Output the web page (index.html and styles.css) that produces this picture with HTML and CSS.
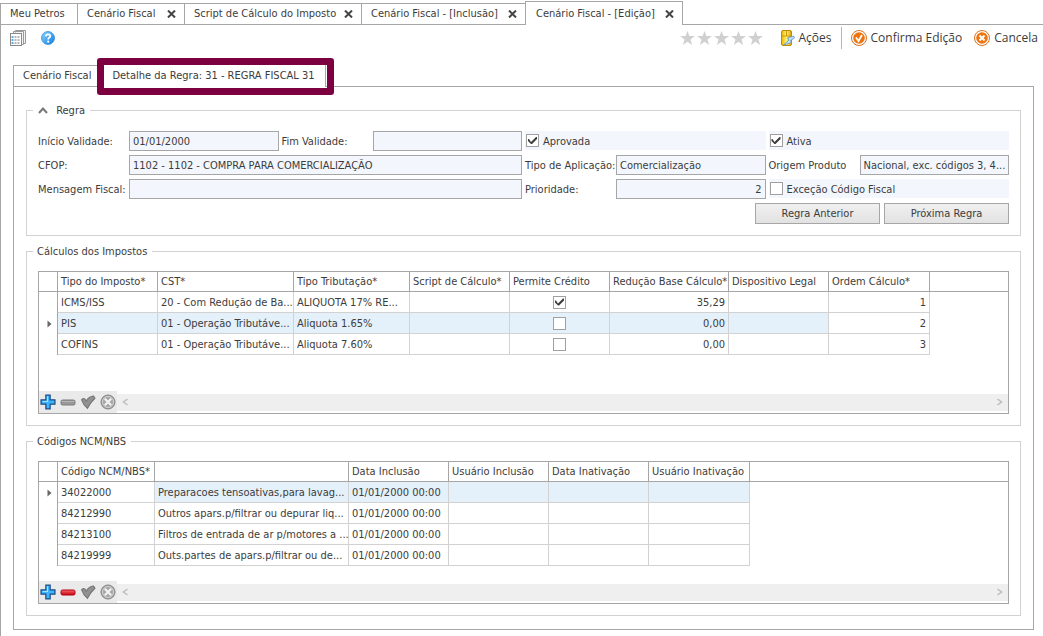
FILE: index.html
```html
<!DOCTYPE html>
<html lang="pt-BR">
<head>
    <meta charset="UTF-8">
    <meta name="viewport" content="width=device-width, initial-scale=1.0">
    <title>Cenário Fiscal - [Edição]</title>
    <link rel="stylesheet" href="styles.css">
</head>
<body>
    <!-- shared icons -->
    <svg class="sprite" aria-hidden="true">
        <defs>
            <linearGradient id="blue" x1="0" y1="0" x2="1" y2="1">
                <stop offset="0" stop-color="#8fd8ff"/><stop offset="1" stop-color="#0a7be0"/>
            </linearGradient>
            <linearGradient id="red" x1="0" y1="0" x2="0" y2="1">
                <stop offset="0" stop-color="#f56a6a"/><stop offset="1" stop-color="#c80010"/>
            </linearGradient>
            <linearGradient id="gold" x1="0" y1="0" x2="1" y2="0">
                <stop offset="0" stop-color="#e8b400"/><stop offset="0.5" stop-color="#fff27a"/><stop offset="1" stop-color="#d9a000"/>
            </linearGradient>
        </defs>
        <symbol id="i-close" viewBox="0 0 9 8"><path d="M1 0.5L8 7.5M8 0.5L1 7.5" fill="none" stroke="#444" stroke-width="2"/></symbol>
        <symbol id="i-star" viewBox="0 0 15 14"><path d="M7.500 0L9.400 4.900L15 5L10.500 8.400L12.100 14L7.500 10.800L2.900 14L4.500 8.400L0 5L5.600 4.900Z" fill="#d0d0d0"/></symbol>
        <symbol id="i-plus" viewBox="0 0 15 15"><path d="M5.500 1H9.500V5.500H14V9.500H9.500V14H5.500V9.500H1V5.500H5.500Z" fill="#3fb4ff" stroke="#1d4f86" stroke-width="1.200"/><path d="M7 2V7H2.500" fill="none" stroke="#a6e0ff"/></symbol>
        <symbol id="i-minus" viewBox="0 0 16 15"><rect x="1" y="5.500" width="14" height="5" rx="1.500" fill="#999" stroke="#7c7c7c"/><path d="M2 7H14" stroke="#b5b5b5"/></symbol>
        <symbol id="i-minus-red" viewBox="0 0 16 15"><rect x="1" y="5.500" width="14" height="5" rx="1.500" fill="url(#red)" stroke="#b80010"/></symbol>
        <symbol id="i-check" viewBox="0 0 15 15"><path d="M1.500 5.500Q3.500 2.500 5.800 6.500Q8.500 2 12.500 1.800L14 4Q9.500 8 7 13.500Q3 10 1.500 5.500Z" fill="#919191" stroke="#747474"/></symbol>
        <symbol id="i-cancel" viewBox="0 0 16 16"><circle cx="8" cy="8" r="7" fill="#a6a6a6" stroke="#858585"/><circle cx="8" cy="8" r="5.500" fill="none" stroke="#d4d4d4"/><path d="M4.800 4.800L11.200 11.200M11.200 4.800L4.800 11.200" stroke="#f2f2f2" stroke-width="2.200"/></symbol>
        <symbol id="i-left" viewBox="0 0 7 8"><path d="M5.500 1L1.500 4L5.500 7" fill="none" stroke="#bdbdbd" stroke-width="1.500"/></symbol>
        <symbol id="i-right" viewBox="0 0 7 8"><path d="M1.500 1L5.500 4L1.500 7" fill="none" stroke="#bdbdbd" stroke-width="1.500"/></symbol>
    </svg>

    <nav class="tabs">
        <div class="tab"><a href="#">Meu Petros</a></div>
        <div class="tab"><a href="#">Cenário Fiscal</a><button class="close" aria-label="Fechar"><svg><use href="#i-close"/></svg></button></div>
        <div class="tab"><a href="#">Script de Cálculo do Imposto</a><button class="close" aria-label="Fechar"><svg><use href="#i-close"/></svg></button></div>
        <div class="tab"><a href="#">Cenário Fiscal - [Inclusão]</a><button class="close" aria-label="Fechar"><svg><use href="#i-close"/></svg></button></div>
        <div class="tab active"><a href="#">Cenário Fiscal - [Edição]</a><button class="close" aria-label="Fechar"><svg><use href="#i-close"/></svg></button></div>
    </nav>

    <main class="frame">
        <div class="toolbar">
            <button class="tool" aria-label="Listas">
                <svg viewBox="0 0 16 16">
                    <path d="M5.500 2.500V0.500H15.500V13.500H13.500M3.500 3.500V1.500H13.500V14.500H11.500" fill="#f4f4f4" stroke="#9a9a9a"/>
                    <rect x="0.500" y="3.500" width="11" height="12" fill="#fff" stroke="#8a8a8a"/>
                    <path d="M2.500 6V14" stroke="#5aaee8" stroke-width="2" stroke-dasharray="2 1"/>
                    <path d="M5.500 6V14M8.500 6V14" stroke="#b8b8b8" stroke-width="2" stroke-dasharray="2 1"/>
                </svg>
            </button>
            <button class="tool" aria-label="Ajuda">
                <svg viewBox="0 0 16 16">
                    <circle cx="8" cy="8" r="6.500" fill="url(#blue)" stroke="#2f8fdc" stroke-width="0.800"/>
                    <path d="M5.800 6.300Q6 4.300 8.100 4.300Q10.300 4.300 10.300 6.100Q10.300 7.200 9.100 7.800Q8.200 8.300 8.200 9.500" fill="none" stroke="#fff" stroke-width="1.700"/>
                    <circle cx="8.200" cy="11.700" r="1.100" fill="#fff"/>
                </svg>
            </button>
            <div class="stars">
                <svg><use href="#i-star"/></svg><svg><use href="#i-star"/></svg><svg><use href="#i-star"/></svg><svg><use href="#i-star"/></svg><svg><use href="#i-star"/></svg>
            </div>
            <button class="tool actions">
                <svg viewBox="0 0 16 16">
                    <rect x="2.500" y="0.500" width="10" height="15" rx="1.500" fill="url(#gold)" stroke="#c08a00"/>
                    <path d="M3 6H12M7.500 1V6" stroke="#d09c00"/>
                    <path d="M14.500 6L8.500 8L10 10L4.500 15L12.500 12.500L11.500 10.500L15.500 8Z" fill="#c4e2fa" stroke="#5a92c4" stroke-width="0.800"/>
                </svg>
                Ações
            </button>
            <button class="tool confirm">
                <svg viewBox="0 0 16 16">
                    <circle cx="8" cy="8" r="7.500" fill="#fff" stroke="#d9701c"/>
                    <circle cx="8" cy="8" r="5.800" fill="#ee7410"/>
                    <path d="M5 7.500L7.500 11L11 5" fill="none" stroke="#fff" stroke-width="1.800"/>
                </svg>
                Confirma Edição
            </button>
            <button class="tool">
                <svg viewBox="0 0 16 16">
                    <circle cx="8" cy="8" r="7.500" fill="#fff" stroke="#d9701c"/>
                    <circle cx="8" cy="8" r="5.800" fill="#ee7410"/>
                    <path d="M5.500 5.500L10.500 10.500M10.500 5.500L5.500 10.500" fill="none" stroke="#fff" stroke-width="2"/>
                </svg>
                Cancela
            </button>
        </div>

        <nav class="subtabs">
            <a href="#" class="subtab">Cenário Fiscal</a>
            <a href="#" class="subtab selected">Detalhe da Regra: 31 - REGRA FISCAL 31</a>
        </nav>

        <div class="panel">
            <fieldset>
                <legend>
                    <svg class="chevron" viewBox="0 0 10 7"><path d="M1 6L5 1.500L9 6" fill="none" stroke="#777" stroke-width="2"/></svg>
                    Regra
                </legend>
                <div class="form">
                    <div class="field"><label for="inicio">Início Validade:</label><input type="text" id="inicio" value="01/01/2000" readonly></div>
                    <div class="field"><label for="fim">Fim Validade:</label><input type="text" id="fim" readonly></div>
                    <div class="option"><input type="checkbox" id="aprovada" checked><label for="aprovada">Aprovada</label></div>
                    <div class="option"><input type="checkbox" id="ativa" checked><label for="ativa">Ativa</label></div>

                    <div class="field wide"><label for="cfop">CFOP:</label><input type="text" id="cfop" value="1102 - 1102 - COMPRA PARA COMERCIALIZAÇÃO" readonly></div>
                    <div class="field"><label for="tipo">Tipo de Aplicação:</label><input type="text" id="tipo" value="Comercialização" readonly></div>
                    <div class="field"><label for="origem">Origem Produto</label><input type="text" id="origem" value="Nacional, exc. códigos 3, 4..." readonly></div>

                    <div class="field wide"><label for="mensagem">Mensagem Fiscal:</label><input type="text" id="mensagem" readonly></div>
                    <div class="field"><label for="prioridade">Prioridade:</label><input type="text" id="prioridade" class="number" value="2" readonly></div>
                    <div class="option"><input type="checkbox" id="excecao"><label for="excecao">Exceção Código Fiscal</label></div>
                </div>
                <div class="buttons">
                    <button class="btn">Regra Anterior</button>
                    <button class="btn">Próxima Regra</button>
                </div>
            </fieldset>

            <fieldset>
                <legend>Cálculos dos Impostos</legend>
                <div class="grid">
                    <div class="grid-body">
                        <table>
                            <colgroup>
                                <col class="w19"><col class="w100"><col class="w136"><col class="w116"><col class="w100"><col class="w100"><col class="w119"><col class="w100"><col class="w101"><col>
                            </colgroup>
                            <thead>
                                <tr><th></th><th>Tipo do Imposto*</th><th>CST*</th><th>Tipo Tributação*</th><th>Script de Cálculo*</th><th>Permite Crédito</th><th>Redução Base Cálculo*</th><th>Dispositivo Legal</th><th>Ordem Cálculo*</th><th></th></tr>
                            </thead>
                            <tbody>
                                <tr><td class="mark"></td><td>ICMS/ISS</td><td>20 - Com Redução de Ba...</td><td>ALIQUOTA 17% RE...</td><td></td><td class="center"><input type="checkbox" aria-label="Permite Crédito" checked></td><td class="right">35,29</td><td></td><td class="right">1</td><td class="rest"></td></tr>
                                <tr class="current"><td class="mark"><svg viewBox="0 0 5 8"><path d="M0.500 0.500L4.500 4L0.500 7.500Z" fill="#666"/></svg></td><td>PIS</td><td>01 - Operação Tributáve...</td><td>Aliquota 1.65%</td><td></td><td class="center"><input type="checkbox" aria-label="Permite Crédito"></td><td class="right">0,00</td><td></td><td class="right focus">2</td><td class="rest"></td></tr>
                                <tr><td class="mark"></td><td>COFINS</td><td>01 - Operação Tributáve...</td><td>Aliquota 7.60%</td><td></td><td class="center"><input type="checkbox" aria-label="Permite Crédito"></td><td class="right">0,00</td><td></td><td class="right">3</td><td class="rest"></td></tr>
                            </tbody>
                        </table>
                    </div>
                    <div class="grid-foot">
                        <div class="navigator">
                            <button aria-label="Incluir"><svg><use href="#i-plus"/></svg></button>
                            <button aria-label="Excluir"><svg><use href="#i-minus"/></svg></button>
                            <button aria-label="Gravar"><svg><use href="#i-check"/></svg></button>
                            <button aria-label="Cancelar"><svg><use href="#i-cancel"/></svg></button>
                        </div>
                        <div class="scroll">
                            <svg><use href="#i-left"/></svg>
                            <svg><use href="#i-right"/></svg>
                        </div>
                    </div>
                </div>
            </fieldset>

            <fieldset>
                <legend>Códigos NCM/NBS</legend>
                <div class="grid">
                    <div class="grid-body">
                        <table>
                            <colgroup>
                                <col class="w19"><col class="w97"><col class="w194"><col class="w100"><col class="w100"><col class="w100"><col class="w101"><col>
                            </colgroup>
                            <thead>
                                <tr><th></th><th>Código NCM/NBS*</th><th></th><th>Data Inclusão</th><th>Usuário Inclusão</th><th>Data Inativação</th><th>Usuário Inativação</th><th></th></tr>
                            </thead>
                            <tbody>
                                <tr class="current"><td class="mark"><svg viewBox="0 0 5 8"><path d="M0.500 0.500L4.500 4L0.500 7.500Z" fill="#666"/></svg></td><td class="focus">34022000</td><td>Preparacoes tensoativas,para lavag...</td><td>01/01/2000 00:00</td><td></td><td></td><td></td><td class="rest"></td></tr>
                                <tr><td class="mark"></td><td>84212990</td><td>Outros apars.p/filtrar ou depurar liq...</td><td>01/01/2000 00:00</td><td></td><td></td><td></td><td class="rest"></td></tr>
                                <tr><td class="mark"></td><td>84213100</td><td>Filtros de entrada de ar p/motores a ...</td><td>01/01/2000 00:00</td><td></td><td></td><td></td><td class="rest"></td></tr>
                                <tr><td class="mark"></td><td>84219999</td><td>Outs.partes de apars.p/filtrar ou de...</td><td>01/01/2000 00:00</td><td></td><td></td><td></td><td class="rest"></td></tr>
                            </tbody>
                        </table>
                    </div>
                    <div class="grid-foot">
                        <div class="navigator">
                            <button aria-label="Incluir"><svg><use href="#i-plus"/></svg></button>
                            <button aria-label="Excluir"><svg><use href="#i-minus-red"/></svg></button>
                            <button aria-label="Gravar"><svg><use href="#i-check"/></svg></button>
                            <button aria-label="Cancelar"><svg><use href="#i-cancel"/></svg></button>
                        </div>
                        <div class="scroll">
                            <svg><use href="#i-left"/></svg>
                            <svg><use href="#i-right"/></svg>
                        </div>
                    </div>
                </div>
            </fieldset>
        </div>
    </main>
</body>
</html>
```

FILE: styles.css
```css
* {
    box-sizing: border-box;
}
body {
    margin: 0;
    min-height: 100vh;
    display: flex;
    flex-direction: column;
    background: #fff;
    color: #3c3c3c;
    font: 11px/14px "DejaVu Sans Condensed", Tahoma, "DejaVu Sans", sans-serif;
}
a {
    color: inherit;
    text-decoration: none;
}
button, input {
    font: inherit;
    color: inherit;
}
button {
    padding: 0;
    border: none;
    background: none;
}
.sprite {
    position: absolute;
    width: 0;
    height: 0;
}

/* document tabs */
.tabs {
    display: flex;
    align-items: flex-end;
    height: 25px;
    border-bottom: 1px solid #a6a6a6;
}
.tab {
    display: flex;
    align-items: center;
    justify-content: space-between;
    height: 21px;
    padding: 0 10px 0 9px;
    border: 1px solid #a6a6a6;
    border-width: 1px 1px 0 0;
    white-space: nowrap;
}
.tab:first-child {
    width: 78px;
    border-left-width: 1px;
}
.tab:nth-child(2) {
    width: 107px;
}
.tab:nth-child(3) {
    width: 177px;
}
.tab:nth-child(4) {
    width: 163px;
    border-right-width: 0;
}
.tab.active {
    width: 158px;
    height: 24px;
    margin-bottom: -1px;
    padding-left: 10px;
    border-left-width: 1px;
    background: #fff;
}
.close {
    width: 9px;
    height: 8px;
    margin-right: -2px;
}
.close svg {
    display: block;
    width: 9px;
    height: 8px;
}

.frame {
    flex: 1;
    padding: 0 9px 6px 12px;
    border-left: 1px solid #a6a6a6;
}

/* toolbar */
.toolbar {
    display: flex;
    align-items: center;
    height: 26px;
    margin-left: -3px;
    font: 12px/16px "Open Sans", "Segoe UI", sans-serif;
}
.tool {
    display: flex;
    align-items: center;
    gap: 4px;
    margin-right: 14px;
    white-space: nowrap;
}
.tool:last-child {
    margin-right: -4px;
}
.tool svg {
    width: 16px;
    height: 16px;
}
.stars {
    display: flex;
    gap: 2px;
    margin-left: auto;
    margin-right: 16px;
}
.stars svg {
    width: 15px;
    height: 14px;
}
.tool.actions {
    margin-right: 9px;
}
.tool.confirm {
    height: 22px;
    margin-right: 12px;
    padding-left: 9px;
    border-left: 1px solid #b4b4b4;
}

/* inner tabs */
.subtabs {
    display: flex;
    align-items: flex-end;
    margin-top: 13px;
}
.subtab {
    height: 21px;
    padding: 3px 9px;
    border: 1px solid #a6a6a6;
    border-width: 1px 0 0 1px;
    white-space: nowrap;
}
.selected {
    position: relative;
    height: 23px;
    margin-bottom: -1px;
    padding: 4px 10px 4px 11px;
    border-right-width: 1px;
    background: #fff;
}
.selected::after {
    content: "";
    position: absolute;
    inset: -7px -9px -8px -4px;
    border: 7px solid #7d0041;
    border-radius: 3px;
}

.panel {
    display: flex;
    flex-direction: column;
    gap: 8px;
    padding: 16px 12px 13px;
    border: 1px solid #a6a6a6;
}
fieldset {
    min-width: 0;
    margin: 0;
    padding: 12px 11px 11px;
    border: 1px solid #d2d2d2;
}
legend {
    margin-left: -5px;
    padding: 0 5px 0 4px;
    line-height: 15px;
}
.chevron {
    width: 10px;
    height: 7px;
    margin: 0 5px 0 1px;
}

/* rule form */
.form {
    display: grid;
    grid-template-columns: repeat(4, 1fr);
    gap: 4px 3px;
    padding-top: 1px;
}
.field {
    display: flex;
    align-items: center;
    min-width: 0;
}
.wide {
    grid-column: span 2;
}
.field label {
    flex: none;
    width: 91px;
    white-space: nowrap;
}
.form label {
    padding-top: 2px;
}
.field input {
    flex: 1;
    min-width: 0;
    height: 20px;
    padding: 0 3px;
    border: 1px solid #a6a6a6;
    background: #f3f7fd;
}
.field .number {
    text-align: right;
}
.option {
    display: flex;
    align-items: center;
    gap: 4px;
    height: 19px;
    padding-left: 1px;
    background: #f3f7fd;
}
input[type="checkbox"] {
    appearance: none;
    display: block;
    width: 13px;
    height: 13px;
    margin: 0;
    border: 1px solid #a0a0a0;
    background: #fff;
}
input[type="checkbox"]:checked::before {
    content: "";
    display: block;
    width: 11px;
    height: 11px;
    background: #3c3c3c;
    clip-path: polygon(1px 4px, 2px 4px, 4px 7px, 9px 2px, 10px 2px, 10px 4px, 5px 9px, 4px 9px, 1px 6px);
}
.buttons {
    display: flex;
    justify-content: flex-end;
    gap: 4px;
    margin-top: 4px;
}
.btn {
    width: 125px;
    height: 21px;
    border: 1px solid #a6a6a6;
    background: linear-gradient(#f0f0f0, #e2e2e2);
}

/* data grids */
.grid {
    border: 1px solid #a6a6a6;
}
.grid-body {
    min-height: 119px;
    overflow: hidden;
}
table {
    width: 100%;
    table-layout: fixed;
    border-collapse: separate;
    border-spacing: 0;
}
.w19 { width: 19px; }
.w97 { width: 97px; }
.w100 { width: 100px; }
.w101 { width: 101px; }
.w116 { width: 116px; }
.w119 { width: 119px; }
.w136 { width: 136px; }
.w194 { width: 194px; }
th, td {
    padding: 0 3px;
    text-align: left;
    font-weight: normal;
    white-space: nowrap;
    overflow: hidden;
}
th {
    height: 20px;
    border: 1px solid #a6a6a6;
    border-width: 0 1px 1px 0;
}
th:last-child {
    border-right: none;
}
td {
    height: 21px;
    padding-top: 2px;
    border: 1px solid #d2d2d2;
    border-width: 0 1px 1px 0;
}
.current td {
    background: #e4f0fa;
}
.current .mark, .current .focus, .current .rest {
    background: #fff;
}
td.mark {
    padding-top: 0;
    border-right-color: #a6a6a6;
    border-bottom: none;
}
.mark svg {
    display: block;
    width: 5px;
    height: 8px;
    margin-left: 5px;
}
td.rest {
    border: none;
}
td.right {
    text-align: right;
}
td.center {
    padding-top: 0;
}
.center input {
    margin: 0 auto;
}
.grid-foot {
    display: flex;
    align-items: center;
}
.navigator {
    display: flex;
    align-items: center;
    gap: 4px;
    width: 78px;
    height: 22px;
    padding-left: 1px;
    background: #eaeaea;
}
.navigator svg {
    display: block;
    width: 16px;
    height: 16px;
}
.scroll {
    flex: 1;
    display: flex;
    align-items: center;
    justify-content: space-between;
    height: 17px;
    padding: 0 5px;
    background: #efefef;
}
.scroll svg {
    width: 7px;
    height: 8px;
}
```
